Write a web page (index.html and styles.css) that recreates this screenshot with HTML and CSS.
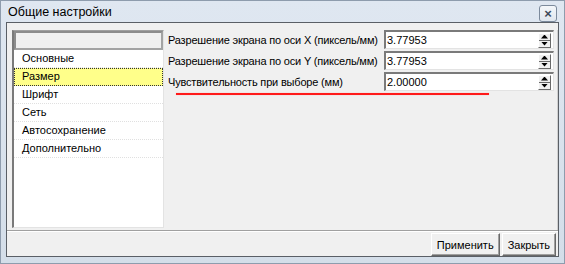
FILE: index.html
```html
<!DOCTYPE html>
<html lang="ru">
<head>
    <meta charset="UTF-8">
    <title>Общие настройки</title>
    <link rel="stylesheet" href="styles.css">
</head>
<body>
    <div class="window">
        <div class="titlebar">
            <span class="title">Общие настройки</span>
            <span class="close-btn">×</span>
        </div>
        <div class="client">
            <div class="main">
                <div class="list">
                    <div class="list-header"></div>
                    <div class="list-item">Основные</div>
                    <div class="list-item selected">Размер</div>
                    <div class="list-item">Шрифт</div>
                    <div class="list-item">Сеть</div>
                    <div class="list-item">Автосохранение</div>
                    <div class="list-item">Дополнительно</div>
                </div>
                <div class="settings">
                    <div class="form">
                        <div class="form-label">Разрешение экрана по оси X (пиксель/мм)</div>
                        <div class="spin">
                            <span class="spin-value">3.77953</span>
                            <span class="spin-buttons"><span class="half"><span class="arrow up"></span></span><span class="half"><span class="arrow down"></span></span></span>
                        </div>
                        <div class="form-label">Разрешение экрана по оси Y (пиксель/мм)</div>
                        <div class="spin">
                            <span class="spin-value">3.77953</span>
                            <span class="spin-buttons"><span class="half"><span class="arrow up"></span></span><span class="half"><span class="arrow down"></span></span></span>
                        </div>
                        <div class="form-label">Чувствительность при выборе (мм)</div>
                        <div class="spin">
                            <span class="spin-value">2.00000</span>
                            <span class="spin-buttons"><span class="half"><span class="arrow up"></span></span><span class="half"><span class="arrow down"></span></span></span>
                        </div>
                    </div>
                    <div class="red-line"></div>
                </div>
            </div>
            <div class="button-bar">
                <button class="btn">Применить</button>
                <button class="btn">Закрыть</button>
            </div>
        </div>
    </div>
</body>
</html>
```

FILE: styles.css
```css
body {
    margin: 0;
    font-family: "Liberation Sans", Arial, sans-serif;
    font-size: 11px;
    color: #000;
    background: #fff;
}
.window {
    box-sizing: border-box;
    width: 565px;
    height: 264px;
    padding: 0 5px 6px 5px;
    background: linear-gradient(#dfe7f1, #d4dee9);
    border: 1px solid #8e9cad;
    display: flex;
    flex-direction: column;
}
.titlebar {
    height: 21px;
    display: flex;
    align-items: center;
    justify-content: space-between;
    padding: 0 2px 0 2px;
}
.title {
    font-size: 12.5px;
    color: #000;
}
.close-btn {
    box-sizing: border-box;
    width: 18px;
    height: 17px;
    margin-top: 4px;
    border: 1px solid #7c8a9c;
    border-radius: 3px;
    background: linear-gradient(#f4f7fa, #dfe6ee);
    display: flex;
    align-items: center;
    justify-content: center;
    font-size: 13px;
    font-weight: bold;
    color: #3d4a5a;
    line-height: 1;
}
.client {
    flex: 1;
    display: flex;
    flex-direction: column;
    border: 1px solid #5a5f66;
    background: #f0f0f0;
}
.main {
    height: 207px;
    display: flex;
    padding: 7px 0 0 5px;
    box-sizing: border-box;
}
.list {
    box-sizing: border-box;
    width: 152px;
    height: 198px;
    background: #fff;
    border-top: 1px solid #a0a0a0;
    border-left: 2px solid #7a7a7a;
    border-right: 1px solid #e3e3e3;
    border-bottom: 1px solid #e3e3e3;
}
.list-header {
    box-sizing: border-box;
    height: 19px;
    background: #f0f0f0;
    border: 2px solid #a3a3a3;
    border-top-color: #8c8c8c;
    border-left-color: #8c8c8c;
}
.list-item {
    box-sizing: border-box;
    height: 18px;
    line-height: 17px;
    padding-left: 8px;
    border-bottom: 1px dotted #e0e0e0;
}
.list-item.selected {
    background: #ffff8a;
    outline: 1px dotted #333;
    outline-offset: -1px;
}
.settings {
    flex: 1;
    margin-left: 2px;
    padding-left: 2px;
    border-right: 1px solid #d0d0d0;
}
.form {
    display: grid;
    grid-template-columns: 216px 170px;
    row-gap: 2px;
    align-items: center;
}
.form-label {
    white-space: nowrap;
    letter-spacing: -0.18px;
}
.spin {
    box-sizing: border-box;
    height: 19px;
    display: flex;
    align-items: center;
    justify-content: space-between;
    background: #fff;
    border-top: 2px solid #7a7a7a;
    border-left: 2px solid #7a7a7a;
    border-right: 1px solid #e3e3e3;
    border-bottom: 1px solid #e3e3e3;
    padding: 0 2px 0 1px;
}
.spin-buttons {
    box-sizing: border-box;
    width: 13px;
    height: 15px;
    display: flex;
    flex-direction: column;
    background: #f0f0f0;
    border-right: 1px solid #696969;
    border-bottom: 1px solid #696969;
    border-top: 1px solid #fff;
    border-left: 1px solid #fff;
}
.half {
    flex: 1;
    display: flex;
    align-items: center;
    justify-content: center;
}
.half:first-child {
    border-bottom: 1px solid #696969;
}
.arrow {
    width: 7px;
    height: 4px;
    background: #000;
}
.arrow.up {
    clip-path: polygon(50% 0, 100% 100%, 0 100%);
}
.arrow.down {
    clip-path: polygon(0 0, 100% 0, 50% 100%);
}
.red-line {
    margin: 2px 0 0 8px;
    width: 313px;
    height: 2px;
    background: #ff1a1a;
    box-shadow: 0 0 1px #ff9090;
}
.button-bar {
    flex: 1;
    display: flex;
    justify-content: flex-end;
    align-items: flex-start;
    gap: 2px;
    padding: 1px 2px 0 0;
    border-top: 1px solid #a0a0a0;
    box-shadow: inset 0 1px 0 #fff;
}
.btn {
    box-sizing: border-box;
    height: 23px;
    margin-top: 1px;
    padding: 0 5px;
    font-family: "Liberation Sans", Arial, sans-serif;
    font-size: 11px;
    background: #f0f0f0;
    border: 1px solid;
    border-color: #fff #696969 #696969 #fff;
    box-shadow: inset -1px -1px 0 #a0a0a0;
    color: #000;
}
```
